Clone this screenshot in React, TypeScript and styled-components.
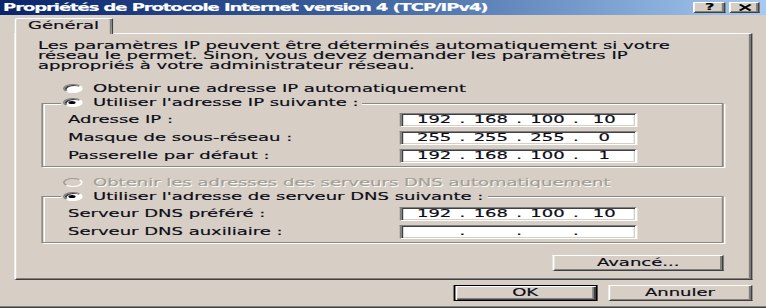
import React from 'react';
import styled, { createGlobalStyle } from 'styled-components';

const S = 1.8;
const FACE = '#d7cfc5';

const GlobalStyle = createGlobalStyle`
  html, body { margin: 0; padding: 0; background: ${FACE}; overflow: hidden; }
  #root { width: 766px; height: 308px; }
  *, *::before, *::after { box-sizing: border-box; }
`;

const Window = styled.div`
  width: ${766 / S}px;
  height: 308px;
  transform: scaleX(${S});
  transform-origin: 0 0;
  display: flex;
  flex-direction: column;
  background: ${FACE};
  font-family: "DejaVu Sans", Verdana, sans-serif;
  font-size: 10px;
  color: #0c0c18;
  -webkit-text-stroke: 0.15px currentColor;
  box-shadow: inset 0 -1px 0 #404040, inset 0 -2px 0 #808080;
`;

const TitleBar = styled.div`
  height: 15px;
  flex: none;
  display: flex;
  align-items: center;
  padding: 0 3.4px 0 1.7px;
  background: linear-gradient(to right, #0a246a 0%, #3a5f9c 45%, #a6caf0 100%);
`;

const Title = styled.span`
  color: #fff;
  font-weight: bold;
  font-size: 10px;
  letter-spacing: -0.6px;
  white-space: nowrap;
  line-height: 15px;
`;

const TitleButtons = styled.div`
  margin-left: auto;
  display: flex;
  gap: 2px;
`;

const TitleButton = styled.div<{ $w: number }>`
  width: ${p => p.$w}px;
  height: 11px;
  display: flex;
  align-items: center;
  justify-content: center;
  background: ${FACE};
  border: 1px solid;
  border-color: #fff #404040 #404040 #fff;
  box-shadow: inset -1px -1px 0 #808080;
  font-weight: bold;
  font-size: 9px;
  line-height: 9px;
  color: #000;
`;

const Body = styled.div`
  flex: 1;
  display: flex;
  flex-direction: column;
  padding: 3px 7.2px 0 7.8px;
`;

const TabRow = styled.div`
  display: flex;
  height: 15px;
  flex: none;
`;

const Tab = styled.div`
  position: relative;
  z-index: 1;
  width: 55px;
  height: 16px;
  margin-bottom: -1px;
  padding-left: 6.8px;
  background: ${FACE};
  border: 1px solid;
  border-bottom: none;
  border-color: #fff #404040 transparent #fff;
  border-radius: 2px 2px 0 0;
  box-shadow: inset -1px 0 0 #808080;
  line-height: 14px;
`;

const Panel = styled.div`
  height: 247px;
  flex: none;
  display: flex;
  flex-direction: column;
  padding: 7px 15px 0 12.3px;
  border: 1px solid;
  border-color: #fff #404040 #404040 #fff;
  box-shadow: inset -1px -1px 0 #808080;
`;

const Intro = styled.p`
  margin: 0;
  line-height: 10px;
  white-space: nowrap;
`;

const RadioRow = styled.div<{ $top: number; $disabled?: boolean }>`
  display: flex;
  align-items: center;
  gap: 5.7px;
  height: 9px;
  line-height: 9px;
  margin: ${p => p.$top}px 0 0 13.9px;
  white-space: nowrap;
  color: ${p => (p.$disabled ? '#a39e96' : 'inherit')};
  text-shadow: ${p => (p.$disabled ? '0.6px 1px 0 #fff' : 'none')};
`;

const RadioCircle = styled.span<{ $checked?: boolean; $disabled?: boolean }>`
  position: relative;
  flex: none;
  width: 11px;
  height: 9px;
  border-radius: 50%;
  background: ${p => (p.$disabled ? FACE : '#fff')};
  border: 1px solid;
  border-color: ${p => (p.$disabled ? '#a09b93 #fff #fff #a09b93' : '#808080 #fff #fff #808080')};
  box-shadow: ${p => (p.$disabled ? 'none' : 'inset 1px 1px 0 #404040')};
  &::after {
    content: '';
    display: ${p => (p.$checked ? 'block' : 'none')};
    position: absolute;
    left: 50%;
    top: 50%;
    width: 4px;
    height: 3px;
    margin: -1.5px 0 0 -2px;
    border-radius: 50%;
    background: #000;
  }
`;

const GroupBox = styled.fieldset<{ $top: number }>`
  margin: ${p => p.$top}px 0 0 2.2px;
  padding: 5.2px 0 3px 0;
  min-width: 0;
  border: 1px solid #8c877f;
  box-shadow: 1px 1px 0 #fff, inset 1px 1px 0 #fff;
`;

const Legend = styled.legend`
  margin-left: 9.7px;
  padding: 0 2px 0 1px;
  background: ${FACE};
  line-height: 9px;
`;

const LegendInner = styled.span`
  display: inline-flex;
  align-items: center;
  gap: 5.7px;
  height: 9px;
  white-space: nowrap;
`;

const Fields = styled.div`
  display: grid;
  grid-template-columns: 184.4px 131.7px;
  row-gap: 4px;
  align-items: center;
  padding-left: 13.5px;
`;

const FieldLabel = styled.span`
  white-space: nowrap;
  line-height: 14px;
`;

const IpBox = styled.div`
  height: 14px;
  display: grid;
  grid-template-columns: 26px 5.5px 26px 5.5px 26px 5.5px 26px;
  align-items: center;
  padding-left: 5px;
  background: #fff;
  border: 1px solid;
  border-color: #808080 #fff #fff #808080;
  box-shadow: inset 1px 1px 0 #404040, inset -1px -1px 0 ${FACE};
  line-height: 12px;
`;

const IpCell = styled.span`
  text-align: center;
`;

const Button = styled.div<{ $w: number; $default?: boolean }>`
  width: ${p => p.$w}px;
  height: 16px;
  display: flex;
  align-items: center;
  justify-content: center;
  background: ${FACE};
  border: 1px solid;
  border-color: ${p => (p.$default ? '#000' : '#fff #404040 #404040 #fff')};
  box-shadow: ${p =>
    p.$default
      ? 'inset 1px 1px 0 #fff, inset -1px -1px 0 #404040, inset -2px -2px 0 #808080'
      : 'inset -1px -1px 0 #808080'};
  line-height: 12px;
  white-space: nowrap;
`;

const AdvancedButton = styled(Button)`
  align-self: flex-end;
  margin-top: 12px;
`;

const Footer = styled.div`
  display: flex;
  justify-content: flex-end;
  gap: 6px;
  margin-top: 5px;
  padding-right: 0.6px;
`;

const IpField = ({ parts }: { parts: string[] }) => (
  <IpBox>
    {parts.map((p, i) => (
      <React.Fragment key={i}>
        {i > 0 && <IpCell>.</IpCell>}
        <IpCell>{p}</IpCell>
      </React.Fragment>
    ))}
  </IpBox>
);

const CloseIcon = () => (
  <svg width="8" height="7" viewBox="0 0 8 7">
    <path d="M1 0.5 L7 6.5 M7 0.5 L1 6.5" stroke="#000" strokeWidth="1.6" fill="none" />
  </svg>
);

export default function App() {
  return (
    <>
      <GlobalStyle />
      <Window>
        <TitleBar>
          <Title>Propriétés de Protocole Internet version 4 (TCP/IPv4)</Title>
          <TitleButtons>
            <TitleButton $w={18.3}>?</TitleButton>
            <TitleButton $w={16.7}>
              <CloseIcon />
            </TitleButton>
          </TitleButtons>
        </TitleBar>
        <Body>
          <TabRow>
            <Tab>Général</Tab>
          </TabRow>
          <Panel>
            <Intro>
              Les paramètres IP peuvent être déterminés automatiquement si votre
              <br />
              réseau le permet. Sinon, vous devez demander les paramètres IP
              <br />
              appropriés à votre administrateur réseau.
            </Intro>
            <RadioRow $top={13.3}>
              <RadioCircle />
              <span>Obtenir une adresse IP automatiquement</span>
            </RadioRow>
            <GroupBox $top={5}>
              <Legend>
                <LegendInner>
                  <RadioCircle $checked />
                  <span>Utiliser l'adresse IP suivante :</span>
                </LegendInner>
              </Legend>
              <Fields>
                <FieldLabel>Adresse IP :</FieldLabel>
                <IpField parts={['192', '168', '100', '10']} />
                <FieldLabel>Masque de sous-réseau :</FieldLabel>
                <IpField parts={['255', '255', '255', '0']} />
                <FieldLabel>Passerelle par défaut :</FieldLabel>
                <IpField parts={['192', '168', '100', '1']} />
              </Fields>
            </GroupBox>
            <RadioRow $top={11} $disabled>
              <RadioCircle $disabled />
              <span>Obtenir les adresses des serveurs DNS automatiquement</span>
            </RadioRow>
            <GroupBox $top={4.5}>
              <Legend>
                <LegendInner>
                  <RadioCircle $checked />
                  <span>Utiliser l'adresse de serveur DNS suivante :</span>
                </LegendInner>
              </Legend>
              <Fields>
                <FieldLabel>Serveur DNS préféré :</FieldLabel>
                <IpField parts={['192', '168', '100', '10']} />
                <FieldLabel>Serveur DNS auxiliaire :</FieldLabel>
                <IpField parts={['', '', '', '']} />
              </Fields>
            </GroupBox>
            <AdvancedButton $w={95.6}>Avancé...</AdvancedButton>
          </Panel>
          <Footer>
            <Button $w={80} $default>OK</Button>
            <Button $w={80}>Annuler</Button>
          </Footer>
        </Body>
      </Window>
    </>
  );
}
